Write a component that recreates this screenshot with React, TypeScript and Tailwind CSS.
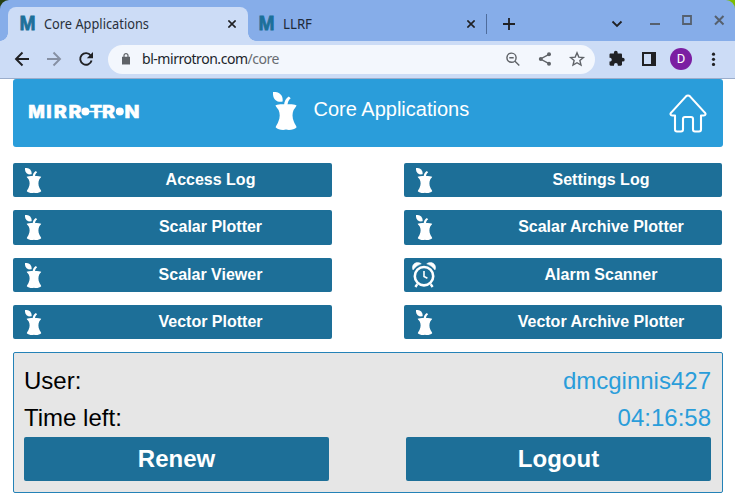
import React from "react";

const Core = ({ className }: { className: string }) => (
  <svg viewBox="0 0 24 38" fill="white" className={className} preserveAspectRatio="none">
    <path d="M0 0 C5.5 -.6 10.4 2.6 9.6 9.6 C4 10.8 -.6 7.5 0 0Z" />
    <path d="M11 13.5 C11.2 9 13 6 15.8 4.5 L17.7 6.3 C15.3 8.3 14.7 10.3 14.5 13.5Z" />
    <path d="M2.4 13.4 C6 12 9 12.4 13 12.4 C17 12.4 20 12 23.6 13.4 C22.6 15.4 21.4 16.4 20.6 18 C19 22 19.2 26 21 30 C21.8 32.2 23.2 33.4 23.6 35.2 C21.5 37.4 17 38.5 13 37.6 C9 38.5 4.8 37.4 2.6 35.2 C3.2 33.4 4.4 32.2 5.2 30 C7.1 26 7.2 22 5.6 18 C4.8 16.4 3.4 15.4 2.4 13.4Z" />
  </svg>
);

const Alarm = () => (
  <svg viewBox="0 0 24 26" className="ml-[7.5px] mt-[-1px] h-[26px] w-6" fill="none" stroke="white">
    <circle cx="12" cy="14.2" r="9.2" strokeWidth="2.6" />
    <path d="M12 9v5.4l3.4 1.8" strokeWidth="1.6" />
    <path d="M5.3 22.2 3.4 25M18.7 22.2l1.9 2.8" strokeWidth="2.4" />
    <path d="M1 8C-1.4 2.5 4.5-1.8 9.3 1.8Q4 3.6 1 8Zm22 0C25.4 2.5 19.5-1.8 14.7 1.8Q20 3.6 23 8Z" fill="white" stroke="white" strokeWidth=".5" />
  </svg>
);

const Favicon = () => (
  <svg viewBox="0 0 16 16" className="h-4 w-4 shrink-0 overflow-visible">
    <text x="-.8" y="14.4" textLength="16.6" lengthAdjust="spacingAndGlyphs" className="fill-[#1c7099] stroke-[#1c7099] stroke-[0.8] font-['Open_Sans',sans-serif] text-[18.8px] font-bold">M</text>
  </svg>
);

const Cross = ({ className }: { className: string }) => (
  <svg viewBox="0 0 8 8" className={className} stroke="currentColor" strokeWidth="1.6" fill="none"><path d="m.4.4 7.2 7.2M7.6.4.4 7.6" /></svg>
);

const Label = ({ width, className, children }: { width: number; className: string; children: React.ReactNode }) => (
  <svg width={width} height="20" className="shrink-0 overflow-visible">
    <text x="0" y="15" textLength={width} lengthAdjust="spacingAndGlyphs" className={className}>{children}</text>
  </svg>
);

const letters = [
  { ch: "M", x: -0.8, w: 16.6 },
  { ch: "I", x: 17.2, w: 5.4 },
  { ch: "R", x: 24.8, w: 13 },
  { ch: "R", x: 39.6, w: 13 },
  { ch: "T", x: 61, w: 12 },
  { ch: "R", x: 73, w: 13 },
  { ch: "N", x: 95.4, w: 15 },
];

const LogoText = () => (
  <svg viewBox="0 0 110 14" className="ml-4 mt-[-4px] h-[14px] w-[110px] overflow-visible" fill="white">
    <g className="stroke-white stroke-[0.6] font-['Inter',sans-serif] text-[17.8px] font-extrabold">
      {letters.map((l) => (
        <text key={l.x} x={l.x} y="13.5" textLength={l.w} lengthAdjust="spacingAndGlyphs">{l.ch}</text>
      ))}
    </g>
    <circle cx="56.4" cy="7.5" r="4" />
    <circle cx="90.8" cy="7.5" r="4" />
    <path d="M56 6.8h20v1.5H56z" />
  </svg>
);

const rows = [
  { h: "h-[34px]", names: ["Access Log", "Settings Log"], pad: "pb-[1px]" },
  { h: "h-[35px]", names: ["Scalar Plotter", "Scalar Archive Plotter"], pad: "pb-[2px]" },
  { h: "h-[34px]", names: ["Scalar Viewer", "Alarm Scanner"], pad: "pb-0" },
  { h: "h-[34px]", names: ["Vector Plotter", "Vector Archive Plotter"], pad: "pb-0" },
];

const uiFont = "font-['Noto_Sans',sans-serif] text-[14px]";

export default function App() {
  return (
    <div className="h-[503px] w-[735px] overflow-hidden bg-white font-['Liberation_Sans',sans-serif]">
      <div className="h-[41px] bg-[linear-gradient(90deg,#253e12_50%,#7dbd00_50%)]">
        <div className="flex h-[41px] rounded-t-[9px] bg-[#86ade9] pl-2 text-[#202124]">
          <div className="relative mt-[7px] flex h-[34px] w-60 items-center rounded-t-lg bg-[#ccdcf6] pl-3">
            <span className="absolute -left-2 bottom-0 h-2 w-2 bg-[radial-gradient(circle_at_0_0,transparent_7.5px,#ccdcf6_8px)]" />
            <span className="absolute -right-2 bottom-0 h-2 w-2 bg-[radial-gradient(circle_at_100%_0,transparent_7.5px,#ccdcf6_8px)]" />
            <Favicon />
            <div className="ml-2"><Label width={105} className={`${uiFont} fill-[#29303a]`}>Core Applications</Label></div>
            <Cross className="ml-auto mr-3 h-2 w-2" />
          </div>
          <div className="mt-[7px] flex h-[34px] w-[239px] items-center pl-[11px]">
            <Favicon />
            <div className="ml-2"><Label width={29} className={`${uiFont} fill-[#202a38]`}>LLRF</Label></div>
            <Cross className="ml-auto mr-3 h-2 w-2" />
          </div>
          <div className="-ml-px mt-[14px] h-5 w-px bg-[#4e6c9c]" />
          <svg viewBox="0 0 248 41" className="h-[41px] w-[248px]" fill="none" stroke="#202124" strokeWidth="1.8">
            <path d="M16 24h12M22 18v12" />
            <path d="m125.5 21.5 4.5 4.5 4.5-4.5" />
            <path d="M163 24h10" stroke="#56606e" strokeWidth="2" />
            <path d="M196 16h8v8h-8z" stroke="#56606e" />
            <path d="m228 16 8.5 8.5m0-8.5-8.5 8.5" stroke="#56606e" strokeWidth="2" />
          </svg>
        </div>
      </div>

      <div className="flex h-[38px] items-center border-b border-[#9badcb] bg-[#ccdcf6]">
        <svg viewBox="0 0 108 37" className="h-[37px] w-[108px] shrink-0" fill="none" stroke="#202124" strokeWidth="1.9">
          <path d="M29 18H16m6.5-6.5L16 18l6.5 6.5" />
          <path d="M47 18h13m-6.5-6.5L60 18l-6.5 6.5" stroke="#8690a3" />
          <path d="M90.7 14.5a5.8 5.8 0 1 0 .9 5" />
          <path d="M93 11v6.2h-6.2Z" fill="#202124" stroke="none" />
        </svg>
        <div className="flex h-[29px] w-[487px] items-center rounded-full bg-[#f3f7fd]">
          <svg viewBox="0 0 8 12" className="mb-[2px] ml-[14px] h-3 w-2 shrink-0" fill="#5f6368"><path d="M0 4h8v7.2H0z" stroke="#5f6368" strokeWidth=".5" /><path d="M2 4V2.6a2 2 0 0 1 4 0V4" fill="none" stroke="#5f6368" strokeWidth="1.2" /></svg>
          <div className={`ml-3 flex pb-[2px] tracking-[-0.46px] text-[#20242a] ${uiFont}`}>
            <span>bl-mirrotron.com</span>
            <span className="text-[#686c72]">/core</span>
          </div>
          <svg viewBox="0 0 90 29" className="ml-auto h-[29px] w-[90px]" fill="none" stroke="#5f6368" strokeWidth="1.4">
            <circle cx="6.5" cy="12.7" r="4.6" />
            <path d="m10 16.2 4.3 4.2M4.3 12.7h4.4" />
            <path d="M44 9.3 35.5 14l8.5 4.7" />
            <g fill="#5f6368" stroke="none"><circle cx="44" cy="9.3" r="2" /><circle cx="35.8" cy="14" r="2" /><circle cx="44" cy="18.7" r="2" /></g>
            <path d="m72 7.8 1.8 4.3 4.6.4-3.5 3.1 1.1 4.5-4-2.4-4 2.4 1.1-4.5-3.5-3.1 4.6-.4z" />
          </svg>
        </div>
        <svg viewBox="0 0 75 37" className="h-[37px] w-[75px] shrink-0">
          <path fill="#202124" transform="translate(.7 -.6)" d="M15 13.2h3.2v-.9a1.9 1.9 0 0 1 3.8 0v.9h3.1c.7 0 1.2.5 1.2 1.2v3h.8a1.9 1.9 0 0 1 0 3.8h-.8v2.9c0 .7-.5 1.2-1.2 1.2h-3v-.8a1.9 1.9 0 0 0-3.8 0v.8H15c-.7 0-1.2-.5-1.2-1.2v-3h.8a1.9 1.9 0 0 0 0-3.7h-.8v-3c0-.7.5-1.2 1.2-1.2Z" />
          <path fill="none" stroke="#202124" strokeWidth="2" d="M48 12h12v12H48z" /><path fill="#202124" d="M56 12h5v12h-5z" />
        </svg>
        <div className="mb-px flex h-[22px] w-[22px] shrink-0 items-center justify-center rounded-full bg-[#7b1fa2] font-['Roboto',sans-serif] text-[13px] text-white">D</div>
        <svg viewBox="0 0 43 37" className="h-[37px] w-[43px] shrink-0" fill="#202124"><circle cx="21.5" cy="13.2" r="1.6" /><circle cx="21.5" cy="18.3" r="1.6" /><circle cx="21.5" cy="23.4" r="1.6" /></svg>
      </div>

      <main className="w-[723px] pl-[13px]">
        <header className="flex h-[68px] items-center rounded-[3px] bg-[#2a9dda]">
          <LogoText />
          <Core className="ml-[134px] mt-[-4px] h-[38px] w-6" />
          <h1 className="ml-[16.5px] mt-[-8px] text-[20px] text-white">Core Applications</h1>
          <svg viewBox="0 0 38 39" className="ml-auto mr-4 h-[39px] w-[38px]" fill="none" stroke="white" strokeWidth="2.1" strokeLinejoin="round">
            <path d="M6 21.5H3.2c-1.8 0-2.3-1.6-1-2.9L16.8 2.6q2.2-2.2 4.4 0L35.8 18.6c1.3 1.3.8 2.9-1 2.9H32v14q0 2-2 2h-4q-2 0-2-2V25q0-2-2-2h-6q-2 0-2 2v10.5q0 2-2 2H8q-2 0-2-2Z" />
          </svg>
        </header>

        <div className="mt-4 flex w-[709px] flex-col gap-[13px]">
          {rows.map((row) => (
            <div key={row.names[0]} className="grid grid-cols-[319px_318px] justify-between">
              {row.names.map((name) => (
                <button key={name} className={`flex items-center rounded-[2px] bg-[#1d6f98] text-white ${row.h}`}>
                  <span className="flex w-[76px] shrink-0">
                    {name === "Alarm Scanner" ? <Alarm /> : <Core className="ml-[12px] h-[25px] w-[16.5px]" />}
                  </span>
                  <span className={`grow text-center text-[16px] font-bold ${row.pad}`}>{name}</span>
                </button>
              ))}
            </div>
          ))}
        </div>

        <section className="mt-[13px] h-[141px] rounded-[2px] border border-[#2482b7] bg-[#e6e6e6] px-[10px] pt-[9px] text-[24px]">
          <div className="flex h-[37px] items-center justify-between"><span className="text-black">User:</span><span className="mr-[1px] text-[#2a9dda]">dmcginnis427</span></div>
          <div className="flex h-[37px] items-center justify-between"><span className="text-black">Time left:</span><span className="mr-[1px] text-[#2a9dda]">04:16:58</span></div>
          <div className="mr-[1px] mt-px flex justify-between font-bold text-white">
            <button className="h-[44px] w-[305px] rounded-[2px] bg-[#1d6f98]">Renew</button>
            <button className="h-[44px] w-[305px] rounded-[2px] bg-[#1d6f98]">Logout</button>
          </div>
        </section>
      </main>
    </div>
  );
}
